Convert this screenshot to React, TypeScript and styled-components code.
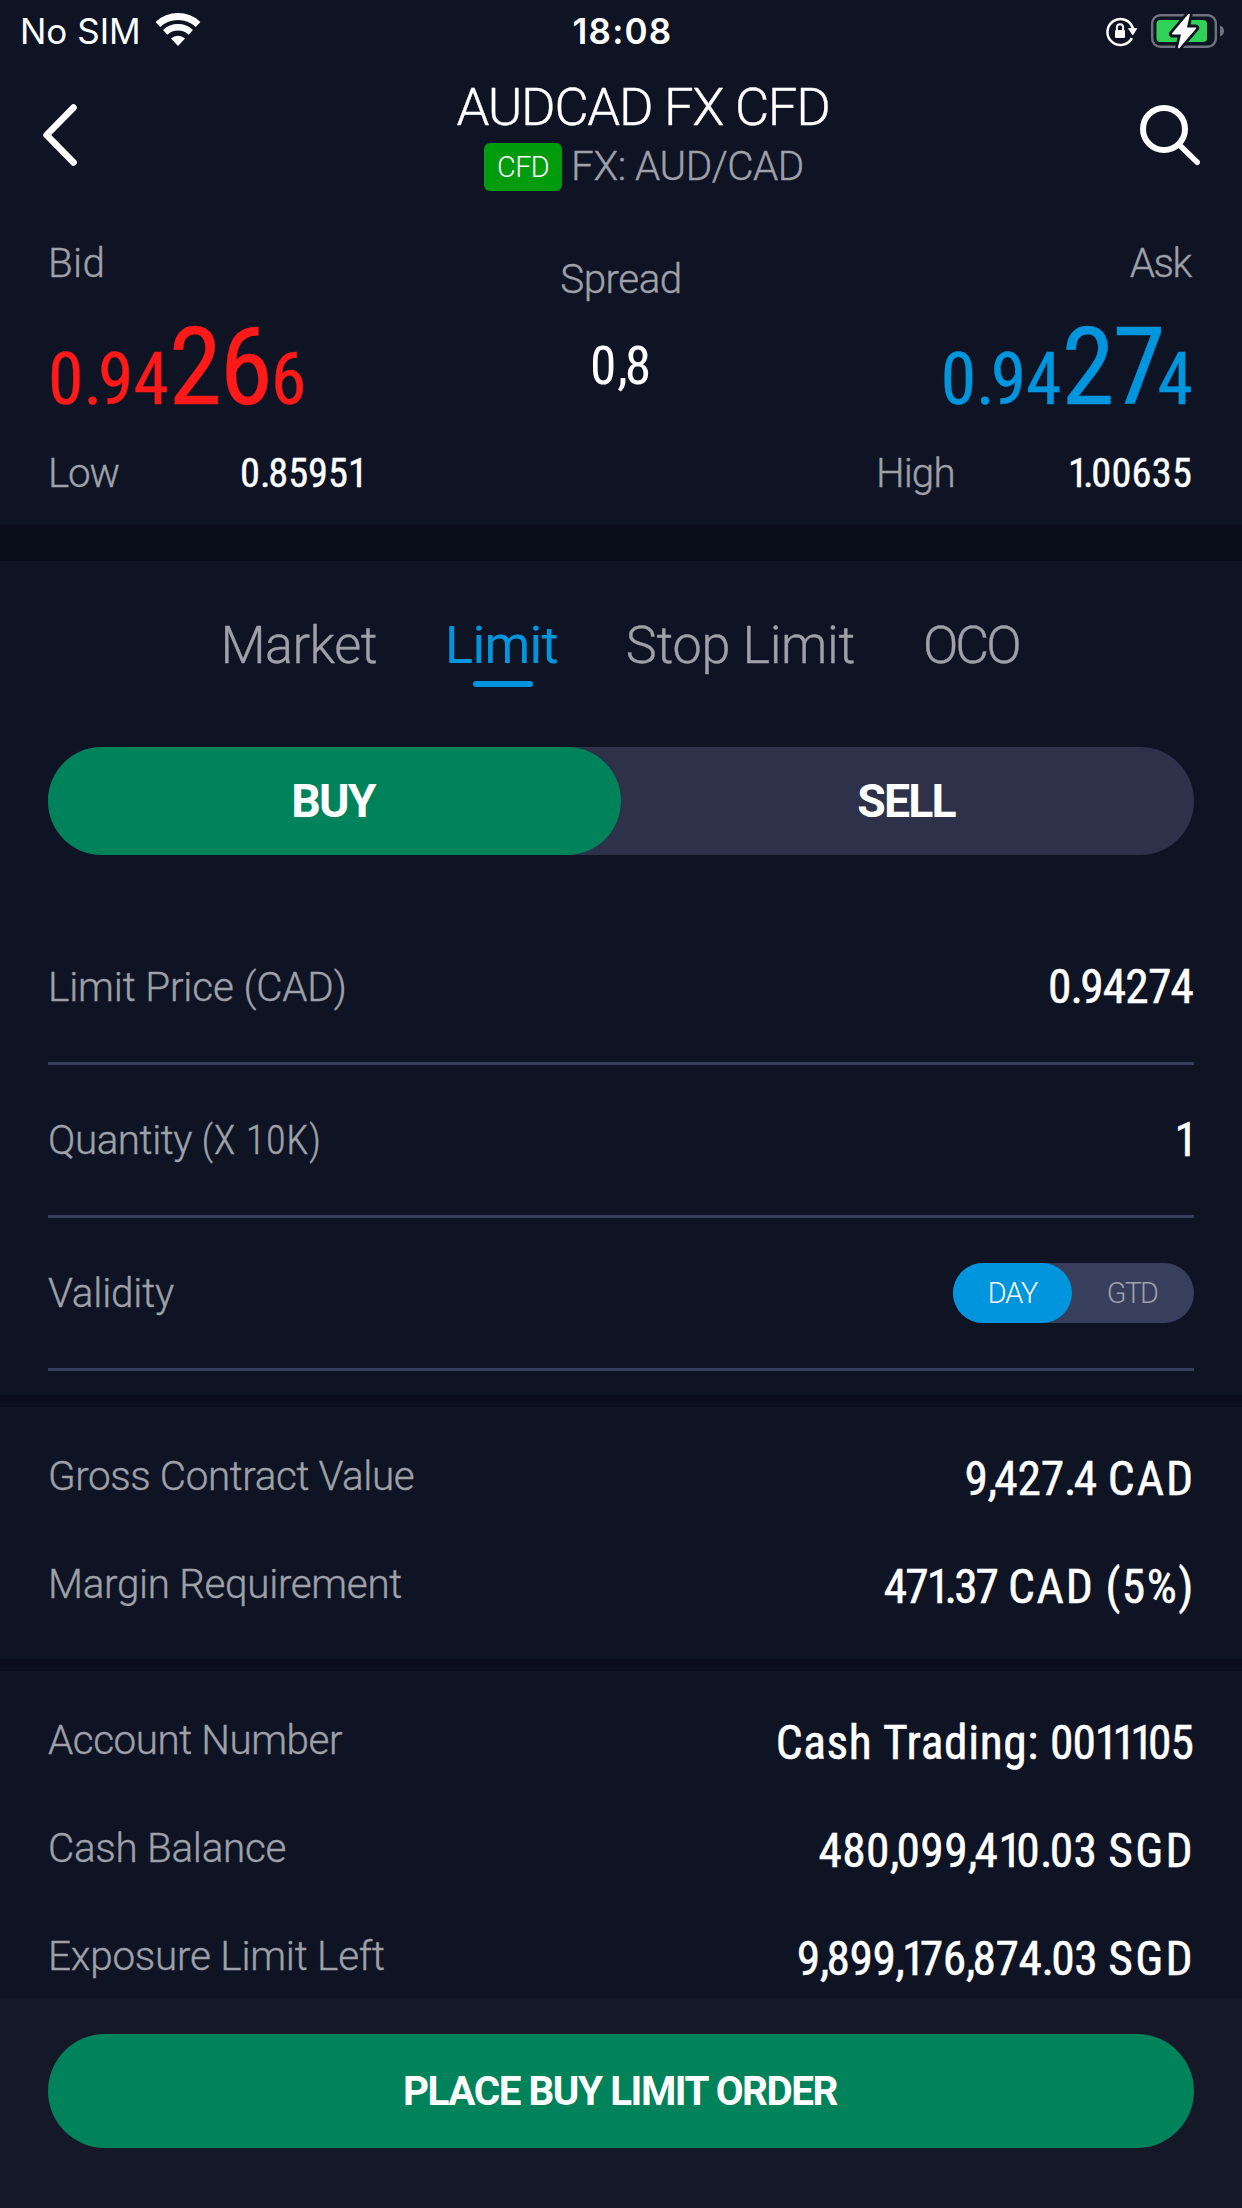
import React from 'react';
import styled, { createGlobalStyle, css } from 'styled-components';

const color = {
  bg: '#0f1425',
  band: '#0a0d1a',
  footer: '#151827',
  line: '#373f5c',
  toggle: '#2d314a',
  muted: '#9fa1a8',
  green: '#00825b',
  badge: '#009c0e',
  red: '#ff1a1a',
  blue: '#0095dd',
  battery: '#30d158',
  batteryRim: '#6f727d',
};

const GlobalStyle = createGlobalStyle`
  * { box-sizing: border-box; }
  body {
    margin: 0;
    background: ${color.bg};
    color: #fff;
    font-family: Roboto, "Liberation Sans", sans-serif;
  }
`;

const Screen = styled.main`
  display: flex;
  flex-direction: column;
  width: 1242px;
  height: 2208px;
  overflow: hidden;
  background: ${color.bg};
`;

/* ---------- text ---------- */

const lightFace = css`
  font-weight: 300;
  -webkit-text-stroke: 0.35px currentColor;
`;

const Label = styled.span<{ $ls?: number }>`
  ${lightFace}
  padding-top: 2px;
  font-size: 40.4px;
  line-height: 48px;
  color: ${color.muted};
  letter-spacing: ${p => p.$ls ?? 0}px;
  white-space: pre;
`;

const Narrow = styled.span<{ $ls?: number }>`
  font-stretch: 75%;
  letter-spacing: ${p => p.$ls ?? 0}px;
`;

const Point = styled.span`
  letter-spacing: -0.06em;
`;

const One = styled.span`
  letter-spacing: -0.12em;
`;

const Figures = ({ text, ls = 0 }: { text: string; ls?: number }) => (
  <Narrow $ls={ls}>
    {text.split(/([.,1])/).map((part, i) => {
      if (part === '1') return <One key={i}>1</One>;
      if (part === '.' || part === ',') return <Point key={i}>{part}</Point>;
      return part;
    })}
  </Narrow>
);

/* ---------- status bar ---------- */

const StatusBar = styled.div`
  display: grid;
  grid-template-columns: 1fr auto 1fr;
  align-items: center;
  height: 63px;
  padding: 0 17px 2px 20px;
  font-family: Inter, sans-serif;
  font-size: 35px;
`;

const Carrier = styled.div`
  display: flex;
  align-items: center;
  gap: 13px;

  svg {
    margin-top: -3px;
  }
`;

const Clock = styled.div`
  font-weight: 600;
  letter-spacing: 1.2px;
`;

const StatusIcons = styled.div`
  display: flex;
  align-items: center;
  justify-content: flex-end;
  gap: 13px;
`;

const WifiIcon = () => (
  <svg width="48" height="36" viewBox="0 0 48 36" fill="none" stroke="#fff">
    <path d="M3.9 13.4A29.5 29.5 0 0 1 44.1 13.4" strokeWidth="6.8" />
    <path d="M11.2 21.3A18.7 18.7 0 0 1 36.8 21.3" strokeWidth="6.4" />
    <path d="M24 35L17 27.6A10.3 10.3 0 0 1 31 27.6Z" fill="#fff" stroke="none" />
  </svg>
);

const RotationLockIcon = () => (
  <svg width="33" height="32" viewBox="0 0 33 32" fill="none" stroke="#fff">
    <path d="M26.9 23.2A13 13 0 1 1 28 13.6" strokeWidth="2.5" />
    <path d="M23.5 13.6H31.8L27.8 20Z" fill="#fff" strokeWidth="0.8" strokeLinejoin="round" />
    <rect x="10" y="15" width="10" height="8" rx="1.2" fill="#fff" stroke="none" />
    <path d="M11.9 15.5V12.4A3.1 3.1 0 0 1 18.1 12.4V15.5" strokeWidth="1.9" />
  </svg>
);

const BatteryIcon = () => (
  <svg width="74" height="38" viewBox="0 0 74 38">
    <rect x="1.2" y="3.2" width="63.6" height="31.6" rx="8" fill="none" stroke={color.batteryRim} strokeWidth="2.4" />
    <path d="M69 13.5C71.8 14.6 73 16.6 73 19S71.8 23.4 69 24.5Z" fill={color.batteryRim} />
    <rect x="5.5" y="8" width="50.5" height="22" rx="4" fill={color.battery} />
    <path
      d="M38 2.6L21.5 22H31L27.8 35.5L44.6 16H35.3Z"
      fill={color.bg}
      stroke={color.bg}
      strokeWidth="7"
      strokeLinejoin="round"
    />
    <path
      d="M38 2.6L21.8 21.6H31L27.8 35.4L44.4 16.2H35Z"
      fill="#fff"
      stroke="#fff"
      strokeWidth="1.6"
      strokeLinejoin="round"
    />
  </svg>
);

/* ---------- header ---------- */

const Header = styled.header`
  display: grid;
  grid-template-columns: 1fr auto 1fr;
  height: 137px;
  padding: 14px 42px 0 86px;
`;

const IconButton = styled.button<{ $side: 'left' | 'right' }>`
  display: flex;
  width: 64px;
  height: 64px;
  margin: 26px 0 0 ${p => (p.$side === 'left' ? '-44px' : '0')};
  padding: 0;
  border: 0;
  background: none;
  justify-self: ${p => (p.$side === 'left' ? 'start' : 'end')};
  justify-content: ${p => (p.$side === 'left' ? 'flex-start' : 'flex-end')};
`;

const TitleBlock = styled.div`
  display: flex;
  flex-direction: column;
  align-items: center;
  gap: 6px;
`;

const Title = styled.h1`
  ${lightFace}
  margin: 0;
  font-size: 52.7px;
  line-height: 60px;
  letter-spacing: -1.25px;
`;

const Subtitle = styled.div`
  display: flex;
  align-items: center;
  gap: 9px;
  padding-left: 2px;

  ${Label} {
    padding-top: 0;
  }
`;

const Badge = styled.span`
  display: flex;
  align-items: center;
  justify-content: center;
  width: 78px;
  height: 48px;
  border-radius: 6px;
  background: ${color.badge};
  font-size: 28.8px;
  font-weight: 300;
  letter-spacing: -0.5px;
`;

/* ---------- quotes ---------- */

const Quotes = styled.section`
  display: grid;
  grid-template-columns: 318px 1fr 318px;
  height: 325px;
  padding: 38px 48px 0;
`;

const Side = styled.div<{ $right?: boolean }>`
  display: flex;
  flex-direction: column;
  align-items: ${p => (p.$right ? 'flex-end' : 'flex-start')};
`;

const AskLabel = styled(Label)`
  padding-right: 3px;
`;

const Spread = styled.div`
  display: flex;
  flex-direction: column;
  align-items: center;
  gap: 32px;
  padding-top: 16px;
`;

const SpreadValue = styled.span`
  font-size: 53.5px;
  line-height: 60px;
`;

const Price = styled.div<{ $tone: string }>`
  margin: 42px 1px 18px 0;
  font-size: 71.7px;
  line-height: 100px;
  font-stretch: 75%;
  color: ${p => p.$tone};
  -webkit-text-stroke: 0.4px currentColor;
  white-space: nowrap;
`;

const Pip = styled.span<{ $kern: number }>`
  font-size: 107.5px;
  line-height: 0;
  letter-spacing: ${p => p.$kern}px;
`;

const Range = styled.div`
  display: flex;
  width: 100%;
`;

const RangeLabel = styled(Label)`
  width: 192px;
  flex: none;
`;

const RangeValue = styled.span`
  padding-top: 2px;
  font-size: 40.4px;
  line-height: 48px;
  -webkit-text-stroke: 0.4px currentColor;
`;

const Band = styled.div<{ $h: number }>`
  flex: none;
  height: ${p => p.$h}px;
  background: ${color.band};
`;

/* ---------- order form ---------- */

const Tabs = styled.nav`
  display: flex;
  justify-content: center;
  gap: 68px;
  padding: 55px 3px 0 0;
`;

const Tab = styled.div<{ $active?: boolean; $ls: number }>`
  display: flex;
  flex-direction: column;
  align-items: center;
  gap: 5px;
  font-size: 52.2px;
  line-height: 60px;
  ${p => (p.$active ? 'font-weight: 400;' : lightFace)}
  letter-spacing: ${p => p.$ls}px;
  color: ${p => (p.$active ? color.blue : color.muted)};

  &::after {
    content: '';
    width: 60px;
    height: 6px;
    margin-left: 3px;
    border-radius: 3px;
    background: ${p => (p.$active ? color.blue : 'transparent')};
  }
`;

const SideToggle = styled.div`
  display: flex;
  height: 108px;
  margin: 60px 48px 57px;
  border-radius: 54px;
  background: ${color.toggle};
`;

const SideOption = styled.button<{ $active?: boolean }>`
  flex: 1;
  padding: 0 3px 0 0;
  border: 0;
  border-radius: 54px;
  background: ${p => (p.$active ? color.green : 'transparent')};
  color: #fff;
  font-family: inherit;
  font-size: 46.4px;
  font-weight: 700;
  letter-spacing: -1.8px;
`;

const Field = styled.div`
  display: flex;
  align-items: center;
  justify-content: space-between;
  height: 153px;
  margin: 0 48px;
  border-bottom: 3px solid ${color.line};
`;

const Value = styled.span<{ $shift?: number }>`
  margin-right: ${p => p.$shift ?? 0}px;
  font-size: 47.5px;
  line-height: 56px;
  -webkit-text-stroke: 0.5px currentColor;
  white-space: pre;
`;

const ValidityToggle = styled.div`
  display: flex;
  width: 241px;
  height: 60px;
  border-radius: 30px;
  background: ${color.line};
`;

const ValidityOption = styled.div<{ $active?: boolean }>`
  display: flex;
  align-items: center;
  justify-content: center;
  flex: ${p => (p.$active ? '0 0 119px' : '1')};
  padding-right: ${p => (p.$active ? '0' : '2px')};
  border-radius: 30px;
  background: ${p => (p.$active ? color.blue : 'transparent')};
  color: ${p => (p.$active ? '#fff' : color.muted)};
  font-size: 28.8px;
  font-weight: 300;
  letter-spacing: ${p => (p.$active ? '-1px' : '-1.8px')};
`;

/* ---------- summary ---------- */

const Spacer = styled.div`
  flex: none;
  height: 24px;
`;

const Summary = styled.section<{ $h: number }>`
  flex: none;
  height: ${p => p.$h}px;
  padding: 15px 48px 0;
  overflow: hidden;
`;

const SummaryRow = styled.div`
  display: flex;
  align-items: center;
  justify-content: space-between;
  height: 108px;

  ${Value} {
    padding-top: 6px;
  }
`;

const Footer = styled.footer`
  flex: 1;
  padding: 36px 48px 0;
  background: ${color.footer};
`;

const PlaceOrder = styled.button`
  width: 100%;
  height: 114px;
  padding: 0 2px 0 0;
  border: 0;
  border-radius: 57px;
  background: ${color.green};
  color: #fff;
  font-family: inherit;
  font-size: 40.4px;
  font-weight: 700;
  letter-spacing: -1.45px;
`;

type Token = { text: string; ls: number };
type Item = { label: string; ls: number; value: Token[] };

const contract: Item[] = [
  { label: 'Gross Contract Value', ls: -0.4, value: [{ text: '9,427.4', ls: -0.2 }, { text: 'CAD', ls: 1.9 }] },
  {
    label: 'Margin Requirement',
    ls: -0.32,
    value: [{ text: '471.37', ls: -2 }, { text: 'CAD', ls: 1.7 }, { text: '(5%)', ls: 1.5 }],
  },
];

const account: Item[] = [
  { label: 'Account Number', ls: -0.45, value: [{ text: 'Cash Trading:', ls: 0.6 }, { text: '0011105', ls: -1 }] },
  { label: 'Cash Balance', ls: -0.28, value: [{ text: '480,099,410.03', ls: 0.4 }, { text: 'SGD', ls: 2.3 }] },
  { label: 'Exposure Limit Left', ls: -0.22, value: [{ text: '9,899,176,874.03', ls: -0.4 }, { text: 'SGD', ls: 2.3 }] },
];

const SummaryList = ({ items, height }: { items: Item[]; height: number }) => (
  <Summary $h={height}>
    {items.map(item => (
      <SummaryRow key={item.label}>
        <Label $ls={item.ls}>{item.label}</Label>
        <Value $shift={item.value[item.value.length - 1].ls > 0 ? -1 : 1}>
          {item.value.map((token, i) => (
            <React.Fragment key={i}>
              {i > 0 && <Narrow> </Narrow>}
              <Figures text={token.text} ls={token.ls} />
            </React.Fragment>
          ))}
        </Value>
      </SummaryRow>
    ))}
  </Summary>
);

export default function App() {
  return (
    <Screen>
      <GlobalStyle />
      <StatusBar>
        <Carrier>
          No SIM
          <WifiIcon />
        </Carrier>
        <Clock>18:08</Clock>
        <StatusIcons>
          <RotationLockIcon />
          <BatteryIcon />
        </StatusIcons>
      </StatusBar>

      <Header>
        <IconButton $side="left" aria-label="Back">
          <svg width="36" height="64" viewBox="0 0 36 64" fill="none" stroke="#fff" strokeWidth="6.6" strokeLinecap="round" strokeLinejoin="round">
            <path d="M31.5 4.6L4.6 32L31.5 59.4" />
          </svg>
        </IconButton>
        <TitleBlock>
          <Title>AUDCAD FX CFD</Title>
          <Subtitle>
            <Badge>CFD</Badge>
            <Label $ls={-0.45}>FX: AUD/CAD</Label>
          </Subtitle>
        </TitleBlock>
        <IconButton $side="right" aria-label="Search">
          <svg width="60" height="64" viewBox="0 0 60 64" fill="none" stroke="#fff" strokeLinecap="round">
            <circle cx="24" cy="26" r="21" strokeWidth="6" />
            <path d="M40 42.5L57.2 59.2" strokeWidth="5.6" />
          </svg>
        </IconButton>
      </Header>

      <Quotes>
        <Side>
          <Label $ls={0.3}>Bid</Label>
          <Price $tone={color.red}>
            <Figures text="0.94" />
            <Pip $kern={-2}>26</Pip>6
          </Price>
          <Range>
            <RangeLabel $ls={-1.2}>Low</RangeLabel>
            <RangeValue>
              <Figures text="0.85951" ls={0} />
            </RangeValue>
          </Range>
        </Side>
        <Spread>
          <Label $ls={-0.5}>Spread</Label>
          <SpreadValue>
            <Figures text="0,8" ls={1} />
          </SpreadValue>
        </Spread>
        <Side $right>
          <AskLabel $ls={-1.4}>Ask</AskLabel>
          <Price $tone={color.blue}>
            <Figures text="0.94" />
            <Pip $kern={-2}>2</Pip>
            <Pip $kern={-8}>7</Pip>4
          </Price>
          <Range>
            <RangeLabel $ls={-0.9}>High</RangeLabel>
            <RangeValue>
              <Figures text="1.00635" ls={0.2} />
            </RangeValue>
          </Range>
        </Side>
      </Quotes>

      <Band $h={36} />

      <Tabs>
        <Tab $ls={-0.5}>Market</Tab>
        <Tab $ls={-0.7} $active>
          Limit
        </Tab>
        <Tab $ls={-0.3}>Stop Limit</Tab>
        <Tab $ls={-3}>OCO</Tab>
      </Tabs>

      <SideToggle>
        <SideOption $active>BUY</SideOption>
        <SideOption>SELL</SideOption>
      </SideToggle>

      <Field>
        <Label $ls={-0.15}>Limit Price (CAD)</Label>
        <Value $shift={1}>
          <Figures text="0.94274" ls={-0.9} />
        </Value>
      </Field>
      <Field>
        <Label $ls={-0.45}>
          Quantity <Narrow $ls={0.6}>(X 10K)</Narrow>
        </Label>
        <Value $shift={-4}>
          <Narrow>1</Narrow>
        </Value>
      </Field>
      <Field>
        <Label $ls={-0.2}>Validity</Label>
        <ValidityToggle>
          <ValidityOption $active>DAY</ValidityOption>
          <ValidityOption>GTD</ValidityOption>
        </ValidityToggle>
      </Field>

      <Spacer />
      <Band $h={12} />
      <SummaryList items={contract} height={252} />
      <Band $h={12} />
      <SummaryList items={account} height={327} />

      <Footer>
        <PlaceOrder>PLACE BUY LIMIT ORDER</PlaceOrder>
      </Footer>
    </Screen>
  );
}
